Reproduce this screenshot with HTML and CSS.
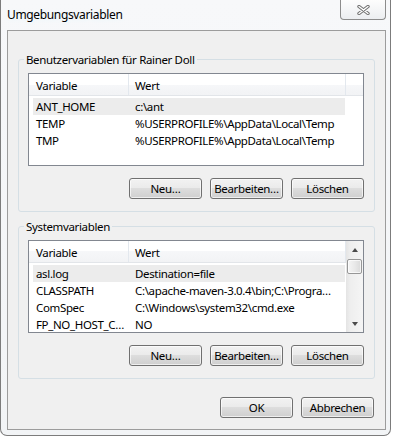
FILE: index.html
```html
<!DOCTYPE html>
<html lang="de">
<head>
    <meta charset="UTF-8">
    <title>Umgebungsvariablen</title>
    <link rel="stylesheet" href="styles.css">
</head>
<body>
    <div class="window">
        <div class="titlebar">
            <span class="title">Umgebungsvariablen</span>
            <div class="close">
                <svg width="13" height="10" viewBox="0 0 13 10">
                    <path d="M2 1.5 L11 8.5 M11 1.5 L2 8.5" stroke="#707070" stroke-width="3.4" stroke-linecap="round"/>
                    <path d="M2 1.5 L11 8.5 M11 1.5 L2 8.5" stroke="#ffffff" stroke-width="1.4" stroke-linecap="round"/>
                </svg>
            </div>
        </div>

        <div class="client">
            <fieldset class="group">
                <legend>Benutzervariablen für Rainer Doll</legend>
                <div class="list">
                    <div class="list-main">
                        <div class="list-head">
                            <span class="head-cell var">Variable</span>
                            <span class="head-cell val">Wert</span>
                            <span class="head-cell fill"></span>
                        </div>
                        <div class="list-body">
                            <div class="row sel"><span class="cell var">ANT_HOME</span><span class="cell val">c:\ant</span></div>
                            <div class="row"><span class="cell var">TEMP</span><span class="cell val">%USERPROFILE%\AppData\Local\Temp</span></div>
                            <div class="row"><span class="cell var">TMP</span><span class="cell val">%USERPROFILE%\AppData\Local\Temp</span></div>
                        </div>
                    </div>
                </div>
                <div class="buttons">
                    <button class="btn">Neu…</button>
                    <button class="btn">Bearbeiten…</button>
                    <button class="btn">Löschen</button>
                </div>
            </fieldset>

            <fieldset class="group system">
                <legend>Systemvariablen</legend>
                <div class="list">
                    <div class="list-main">
                        <div class="list-head">
                            <span class="head-cell var">Variable</span>
                            <span class="head-cell val">Wert</span>
                        </div>
                        <div class="list-body">
                            <div class="row sel"><span class="cell var">asl.log</span><span class="cell val">Destination=file</span></div>
                            <div class="row"><span class="cell var">CLASSPATH</span><span class="cell val">C:\apache-maven-3.0.4\bin;C:\Progra…</span></div>
                            <div class="row"><span class="cell var">ComSpec</span><span class="cell val">C:\Windows\system32\cmd.exe</span></div>
                            <div class="row"><span class="cell var">FP_NO_HOST_C…</span><span class="cell val">NO</span></div>
                        </div>
                    </div>
                    <div class="scrollbar">
                        <div class="sb-btn"><span class="arrow up"></span></div>
                        <div class="sb-track"><div class="sb-thumb"></div></div>
                        <div class="sb-btn"><span class="arrow down"></span></div>
                    </div>
                </div>
                <div class="buttons">
                    <button class="btn">Neu…</button>
                    <button class="btn">Bearbeiten…</button>
                    <button class="btn">Löschen</button>
                </div>
            </fieldset>

            <div class="dialog-buttons">
                <button class="btn">OK</button>
                <button class="btn">Abbrechen</button>
            </div>
        </div>
    </div>
</body>
</html>
```

FILE: styles.css
```css
* {
    margin: 0;
    padding: 0;
    box-sizing: border-box;
}

body {
    font-family: "Noto Sans", "Open Sans", sans-serif;
    font-size: 11.5px;
    letter-spacing: -0.35px;
    color: #000000;
    background: #ffffff;
    width: 394px;
    height: 438px;
    overflow: hidden;
}

.window {
    width: 391px;
    height: 436px;
    background: linear-gradient(180deg, #f7f8fa 0%, #f2f4f6 100%);
    border: 1px solid #7c7c7c;
    border-top: none;
    border-radius: 0 0 7px 7px;
    display: flex;
    flex-direction: column;
}

.titlebar {
    height: 30px;
    flex-shrink: 0;
    display: flex;
    justify-content: space-between;
    align-items: flex-start;
    padding: 0 4px 0 6px;
}

.title {
    margin-top: 7px;
    font-size: 12px;
    line-height: 16px;
    text-shadow: 0 1px 5px #e4f6fb, 0 0 8px #ffffff;
}

.close {
    width: 46px;
    height: 20px;
    border: 1px solid #8c8c8c;
    border-top: none;
    border-radius: 0 0 4px 4px;
    background: linear-gradient(180deg, #fdfdfd 0%, #eceef1 100%);
    display: flex;
    align-items: center;
    justify-content: center;
}

.client {
    flex: 1;
    margin: 0 4px 5px 6px;
    border: 1px solid #9c9c9c;
    background: #f0f0f0;
    padding: 21px 10px 11px 10px;
    display: flex;
    flex-direction: column;
}

.group {
    border: 1px solid #d5dfe5;
    border-radius: 3px;
    padding: 6px 10px 12px 9px;
    min-width: 0;
}

.group legend {
    margin-left: -4px;
    padding: 0 2px;
    line-height: 15px;
}

.group.system {
    margin-top: 7px;
}

.list {
    height: 93px;
    border: 1px solid #828790;
    background: #ffffff;
    display: flex;
}

.list-main {
    flex: 1;
    min-width: 0;
    display: flex;
    flex-direction: column;
}

.list-head {
    height: 22px;
    flex-shrink: 0;
    display: flex;
    background: linear-gradient(180deg, #ffffff 0%, #ffffff 50%, #f6f7f9 50%, #f2f3f5 100%);
    border-bottom: 1px solid #e2e5e9;
}

.head-cell {
    display: flex;
    align-items: center;
    padding: 1px 0 0 7px;
    border-right: 1px solid #e3e8ee;
}

.head-cell.var {
    width: 100px;
}

.head-cell.val {
    width: 217px;
    padding-left: 6px;
}

.head-cell.fill {
    flex: 1;
    border-right: none;
}

.list-body {
    padding: 2px 0 0 4px;
}

.row {
    width: 312px;
    height: 17px;
    display: flex;
    align-items: center;
    white-space: nowrap;
}

.row.sel {
    background: #ececec;
}

.cell {
    overflow: hidden;
    padding-left: 3px;
}

.cell.var {
    width: 99px;
    flex-shrink: 0;
}

.cell.val {
    flex: 1;
}

.scrollbar {
    width: 17px;
    flex-shrink: 0;
    display: flex;
    flex-direction: column;
    background: linear-gradient(90deg, #e4e4e4 0%, #eeeeee 25%, #f5f5f5 100%);
}

.sb-btn {
    height: 17px;
    display: flex;
    align-items: center;
    justify-content: center;
}

.arrow {
    width: 0;
    height: 0;
    border-left: 3.5px solid transparent;
    border-right: 3.5px solid transparent;
}

.arrow.up {
    border-bottom: 4px solid #4a4a4a;
}

.arrow.down {
    border-top: 4px solid #4a4a4a;
}

.sb-track {
    flex: 1;
    padding: 1px 1px 0 1px;
}

.sb-thumb {
    height: 15px;
    border: 1px solid #979797;
    border-radius: 2px;
    background: linear-gradient(90deg, #f5f5f5 0%, #e9e9e9 50%, #dadada 100%);
    box-shadow: inset 0 0 0 1px rgba(255, 255, 255, 0.7);
}

.buttons {
    display: flex;
    justify-content: flex-end;
    gap: 8px;
    margin-top: 12px;
}

.btn {
    width: 73px;
    height: 21px;
    font: inherit;
    letter-spacing: inherit;
    color: #000000;
    border: 1px solid #707070;
    border-radius: 3px;
    background: linear-gradient(180deg, #f2f2f2 0%, #ebebeb 45%, #dddddd 50%, #cfcfcf 100%);
    box-shadow: inset 0 0 0 1px rgba(255, 255, 255, 0.65);
    white-space: nowrap;
}

.dialog-buttons {
    margin-top: auto;
    display: flex;
    justify-content: flex-end;
    gap: 8px;
    padding-right: 1px;
}
```
